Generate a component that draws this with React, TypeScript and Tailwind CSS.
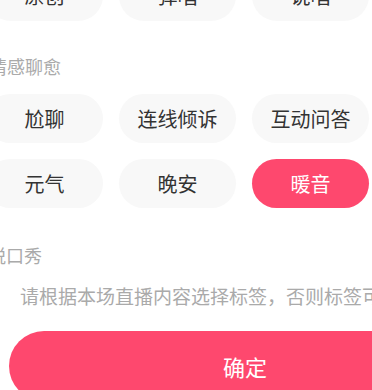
const rows: { label?: string; tags: string[] }[] = [
  { tags: ['原创', '弹唱', '说唱'] },
  { label: '情感聊愈', tags: ['尬聊', '连线倾诉', '互动问答'] },
  { tags: ['元气', '晚安', '暖音'] },
];

const selected = '暖音';

function Tag({ text }: { text: string }) {
  const active = text === selected;
  return (
    <div
      className={`flex h-[49px] items-center justify-center rounded-full text-[20px] ${
        active ? 'bg-[#fe486e] text-white' : 'bg-[#f8f8f8] text-[#333333]'
      }`}
    >
      {text}
    </div>
  );
}

function TagRow({ tags }: { tags: string[] }) {
  return (
    <div className="grid grid-cols-[117px_117px_117px] gap-x-4">
      {tags.map((t) => (
        <Tag key={t} text={t} />
      ))}
    </div>
  );
}

export default function App() {
  return (
    <div
      className="h-[390px] w-[372px] overflow-hidden bg-white"
      style={{ fontFamily: '"Noto Sans CJK SC", "Noto Sans", sans-serif' }}
    >
      <div className="-ml-[14px] -mt-[29px] w-[520px]">
        <div className="grid h-[50px] grid-cols-[117px_117px_117px] gap-x-4">
          {rows[0].tags.map((t) => (
            <div
              key={t}
              className="flex h-[50px] items-center justify-center rounded-full bg-[#f8f8f8] text-[20px] text-[#333333]"
            >
              {t}
            </div>
          ))}
        </div>

        <div className="mt-[33px] ml-[3px] h-[24px] text-[18px] leading-[24px] text-[#aaaaaa]">
          {rows[1].label}
        </div>

        <div className="mt-[16px] flex flex-col gap-y-4">
          <TagRow tags={rows[1].tags} />
          <TagRow tags={rows[2].tags} />
        </div>

        <div className="mt-[35px] ml-[2px] h-[24px] text-[18px] leading-[24px] text-[#aaaaaa]">
          脱口秀
        </div>

        <div className="mt-[17px] ml-[34px] h-[24px] whitespace-nowrap text-[19px] leading-[24px] text-[#aaaaaa]">
          请根据本场直播内容选择标签，否则标签可能会被系统修改
        </div>
      </div>

      <div className="ml-[9px] mt-[23px] flex h-[70px] w-[472px] items-center justify-center rounded-full bg-[#fe486e] text-[22px] text-white">
        确定
      </div>
    </div>
  );
}
